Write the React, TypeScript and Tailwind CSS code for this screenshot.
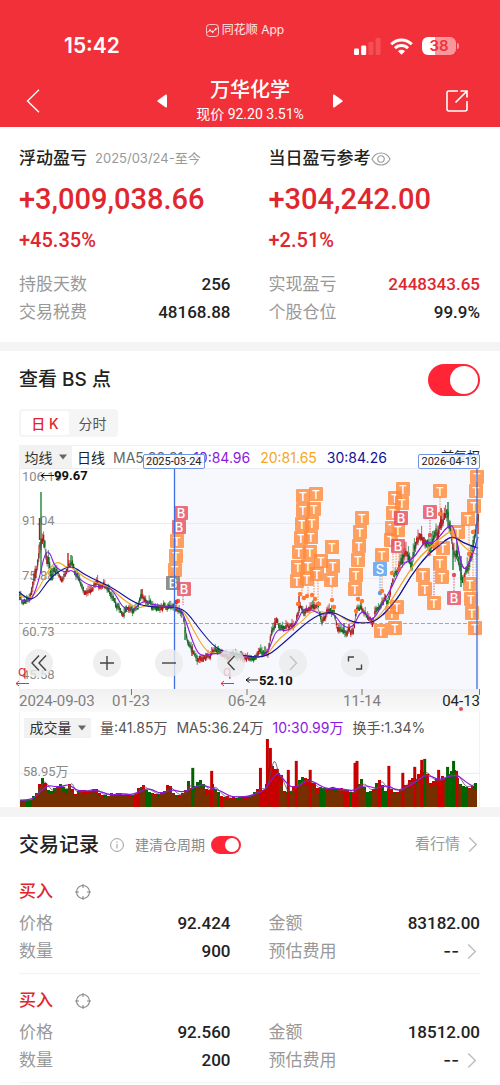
import type { ReactNode } from "react";

type Point = [number, number];
type Marker = [string, number, number];

const din = "font-[Roboto,'Noto_Sans_CJK_SC',sans-serif]";

/* ---------- chart data, in the units of the chart's viewBox ---------- */

const price: Point[] = [
  [0, 130], [6, 135], [11, 129], [14, 115], [18, 103], [21, 78], [24, 73], [28, 89], [33, 105], [38, 100],
  [43, 114], [48, 102], [52, 93], [56, 104], [61, 115], [64, 124], [71, 122], [78, 115], [88, 119], [94, 129],
  [103, 147], [109, 142], [116, 144], [123, 127], [129, 135], [138, 139], [144, 140], [151, 137], [158, 140],
  [164, 145], [168, 172], [173, 180], [178, 190], [184, 189], [191, 189], [196, 180], [201, 185], [208, 189],
  [214, 187], [231, 191], [241, 185], [249, 185], [253, 162], [258, 154], [263, 162], [269, 158], [276, 159],
  [281, 136], [286, 145], [293, 137], [299, 139], [303, 152], [309, 144], [314, 143], [319, 160], [328, 164],
  [334, 162], [339, 138], [346, 145], [353, 155], [358, 142], [364, 133], [369, 132], [374, 112], [381, 97],
  [386, 85], [393, 93], [398, 73], [404, 67], [411, 79], [418, 66], [423, 52], [428, 47], [431, 55], [434, 82],
  [439, 92], [443, 112], [448, 99], [453, 86], [456, 69], [459, 50],
];

const ma10: Point[] = [
  [0, 131], [9, 135], [14, 129], [20, 112], [26, 84], [31, 84], [36, 100], [48, 105], [53, 101], [64, 115],
  [78, 119], [91, 119], [98, 129], [104, 140], [114, 143], [124, 132], [134, 137], [158, 139], [164, 144],
  [174, 175], [181, 189], [194, 185], [214, 187], [231, 190], [246, 188], [251, 179], [258, 160], [268, 164],
  [278, 155], [284, 140], [293, 142], [303, 147], [314, 144], [324, 159], [334, 160], [343, 140], [353, 155],
  [364, 135], [374, 117], [384, 95], [394, 92], [406, 72], [414, 77], [431, 55], [436, 62], [444, 107],
  [453, 89], [459, 69],
];

const ma20: Point[] = [
  [0, 128], [11, 132], [21, 119], [31, 99], [39, 93], [48, 100], [53, 99], [68, 112], [91, 119], [101, 129],
  [118, 141], [128, 137], [144, 139], [164, 140], [174, 162], [188, 185], [198, 185], [214, 187], [231, 190],
  [248, 188], [256, 175], [268, 164], [284, 153], [293, 142], [308, 145], [316, 144], [331, 155], [344, 154],
  [354, 155], [371, 135], [384, 113], [398, 92], [408, 82], [423, 69], [433, 62], [439, 72], [448, 82],
  [459, 87],
];

const ma30: Point[] = [
  [0, 124], [9, 132], [18, 129], [28, 114], [38, 104], [53, 97], [64, 106], [81, 114], [94, 120], [114, 134],
  [128, 139], [158, 139], [168, 144], [181, 162], [198, 182], [214, 185], [231, 189], [248, 189], [268, 172],
  [288, 154], [303, 145], [316, 144], [334, 155], [353, 155], [364, 147], [378, 132], [391, 109], [408, 87],
  [421, 77], [433, 67], [444, 75], [459, 80],
];

const markers: Marker[] = [
  ["T", 158, 73], ["T", 157, 88], ["T", 156, 102], ["G", 154, 115], ["B", 160, 59], ["B", 162, 45], ["B", 165, 121],
  ["T", 278, 113], ["T", 279, 99], ["T", 280, 84], ["T", 282, 70], ["T", 283, 56], ["T", 284, 42], ["T", 284, 28],
  ["T", 288, 111], ["T", 289, 98], ["T", 291, 84], ["T", 292, 69], ["T", 293, 55], ["T", 295, 41], ["T", 297, 26],
  ["T", 298, 106], ["T", 302, 93], ["T", 312, 112], ["T", 314, 98], ["T", 313, 79],
  ["T", 336, 121], ["T", 337, 107], ["T", 339, 92], ["T", 340, 78], ["T", 341, 64], ["T", 343, 50],
  ["T", 363, 87], ["S", 361, 101], ["T", 362, 163], ["T", 373, 145], ["T", 378, 139], ["T", 376, 160],
  ["T", 372, 72], ["T", 373, 60], ["T", 374, 45], ["T", 376, 30], ["T", 379, 62], ["T", 383, 35], ["T", 384, 21],
  ["B", 382, 50], ["B", 379, 78], ["B", 411, 44], ["T", 421, 23],
  ["T", 424, 80], ["T", 421, 95], ["T", 423, 109], ["T", 404, 107], ["T", 406, 121], ["T", 415, 135],
  ["T", 439, 64], ["B", 435, 130],
  ["T", 449, 51], ["T", 455, 38], ["T", 457, 23], ["T", 458, 9],
  ["T", 451, 116], ["T", 452, 131], ["T", 453, 145], ["T", 456, 160],
];

const markerFill: Record<string, string> = { T: "#ff8a3c", B: "#e4505f", S: "#559fee", G: "#777777" };

// x, y1, y2, colour of the dotted line that ties a marker to its candle
const leaders: [number, number, number, string][] = [
  [283, 119, 132, "#ff8a3c"], [289, 119, 128, "#ff8a3c"], [295, 112, 130, "#ff8a3c"], [299, 112, 132, "#ff8a3c"],
  [313, 119, 130, "#ff8a3c"], [340, 126, 134, "#ff8a3c"], [361, 108, 124, "#559fee"], [363, 108, 124, "#ff8a3c"],
  [374, 80, 104, "#ff8a3c"], [377, 85, 104, "#ff8a3c"], [380, 85, 102, "#ff8a3c"], [411, 52, 68, "#e4505f"],
  [421, 30, 48, "#ff8a3c"], [415, 88, 128, "#e4505f"], [435, 108, 123, "#e4505f"], [450, 58, 108, "#ff8a3c"],
  [454, 85, 140, "#ff8a3c"], [457, 85, 152, "#ff8a3c"], [164, 128, 137, "#e4505f"],
];

const dots: [number, number, string][] = [
  [281, 126, "#ff7a2e"], [285, 130, "#ff7a2e"], [288, 128, "#ff7a2e"], [293, 127, "#ff7a2e"], [296, 131, "#ff7a2e"],
  [279, 136, "#ff7a2e"], [300, 136, "#ff7a2e"], [313, 132, "#ff7a2e"], [315, 139, "#ff7a2e"], [339, 131, "#ff7a2e"],
  [343, 133, "#ff7a2e"], [337, 143, "#ff7a2e"], [361, 125, "#559fee"], [363, 123, "#ff7a2e"], [373, 105, "#ff7a2e"],
  [380, 101, "#e4505f"], [411, 67, "#e4505f"], [421, 46, "#ff7a2e"], [410, 86, "#ff7a2e"], [415, 79, "#ff7a2e"],
  [418, 76, "#ff7a2e"], [435, 107, "#e4505f"], [454, 64, "#ff7a2e"], [450, 86, "#ff7a2e"], [159, 133, "#ff5030"],
  [157, 134, "#e4302f"],
];

const volume: Point[] = [
  [0, 7], [11, 8], [16, 14], [20, 28], [23, 30], [27, 18], [33, 19], [39, 26], [46, 17], [49, 27], [54, 14],
  [61, 17], [76, 18], [81, 12], [98, 14], [114, 12], [119, 22], [124, 22], [131, 15], [141, 13], [149, 22],
  [158, 12], [164, 14], [168, 26], [173, 20], [182, 27], [188, 15], [193, 22], [198, 16], [204, 10], [228, 11],
  [234, 15], [241, 20], [246, 15], [249, 42], [253, 40], [258, 34], [262, 30], [266, 14], [274, 20], [278, 26],
  [283, 30], [291, 28], [298, 19], [314, 20], [328, 17], [334, 14], [338, 24], [343, 28], [348, 17], [354, 18],
  [361, 27], [368, 15], [371, 22], [374, 18], [381, 17], [386, 24], [394, 27], [401, 33], [407, 40], [411, 25],
  [414, 28], [421, 30], [429, 34], [436, 36], [441, 28], [446, 20], [458, 24],
];

const volumeSpikes: [number, number, string][] = [
  [172, 39, "#006400"], [191, 36, "#c80000"], [240, 39, "#c80000"], [247, 68, "#c80000"], [250, 59, "#c80000"],
  [257, 38, "#c80000"], [268, 37, "#c80000"], [276, 46, "#c80000"], [290, 37, "#c80000"], [335, 44, "#c80000"],
  [337, 46, "#c80000"], [369, 41, "#c80000"], [383, 34, "#c80000"], [395, 40, "#c80000"], [402, 47, "#c80000"],
  [405, 48, "#006400"], [419, 37, "#c80000"], [428, 40, "#006400"], [434, 46, "#006400"], [437, 36, "#c80000"],
];

const VOLUME_BASE = 69;

function at(points: Point[], x: number) {
  for (let i = 1; i < points.length; i++) {
    const [x0, y0] = points[i - 1];
    const [x1, y1] = points[i];
    if (x <= x1) return y0 + ((y1 - y0) * (x - x0)) / (x1 - x0);
  }
  return points[points.length - 1][1];
}

// fixed pseudo-random sequence, so the chart is the same on every render
function noise(i: number) {
  const v = Math.sin(i * 12.9898 + 4.137) * 43758.5453;
  return v - Math.floor(v);
}

// smooth path through the points by way of their midpoints
function curve(points: Point[]) {
  let d = `M${points[0][0]} ${points[0][1]}`;
  for (let i = 1; i < points.length - 1; i++) {
    const [x, y] = points[i];
    const [nx, ny] = points[i + 1];
    d += `Q${x} ${y} ${(x + nx) / 2} ${(y + ny) / 2}`;
  }
  const [lx, ly] = points[points.length - 1];
  return `${d}L${lx} ${ly}`;
}

const candles = Array.from({ length: 383 }, (_, i) => {
  const x = i * 1.2 + 0.6;
  const slope = at(price, x + 2) - at(price, x - 2);
  const wild = x > 380 || (x > 12 && x < 34) ? 1.7 : 1;
  const mid = at(price, x) + (noise(Math.floor(i / 2) + 200) - 0.5) * 5 * wild;
  return {
    x,
    up: noise(Math.floor(i / 3)) < (slope < -1.5 ? 0.75 : slope > 1.5 ? 0.3 : 0.5),
    high: mid - (1 + noise(i + 500) * 6) * wild,
    low: mid + (1 + noise(i + 900) * 4) * wild,
    top: mid - (0.8 + noise(i + 20) * 2) * wild,
    bottom: mid + (0.8 + noise(i + 60) * 2) * wild,
  };
});

const bars = Array.from({ length: 153 }, (_, i) => {
  const x = i * 3;
  const level = at(volume, x + 1);
  return {
    x,
    height: Math.round(level * (0.86 + noise(i + 40) * 0.2)),
    base: Math.round(level * (0.72 + noise(i + 70) * 0.14)),
    red: noise(i + 300) > (x > 220 ? 0.38 : 0.52),
    mixed: noise(Math.floor(i / 2) + 900) > (x > 220 ? 0.35 : 0.12),
  };
});

const volumeLine: Point[] = Array.from({ length: 66 }, (_, i) => [
  i * 7,
  VOLUME_BASE - (at(volume, i * 7) + at(volume, Math.max(0, i * 7 - 5)) + at(volume, Math.max(0, i * 7 - 10))) / 3.2,
]);

const volumeLineFast: Point[] = Array.from({ length: 115 }, (_, i) => [
  i * 4,
  VOLUME_BASE - at(volume, Math.max(0, i * 4 - 3)) * (0.85 + noise(i + 11) * 0.15) - (i === 64 ? 14 : 0),
]);

const priceLabels: [string, number][] = [
  ["106.19", 13],
  ["91.04", 57],
  ["75.88", 112],
  ["60.73", 168],
  ["45.58", 211],
];

/* ---------- small parts ---------- */

function Toggle({ id, small }: { id: string; small?: boolean }) {
  return (
    <input
      id={id}
      type="checkbox"
      role="switch"
      defaultChecked
      className={
        small
          ? "relative h-[18px] w-[30px] shrink-0 appearance-none rounded-full bg-gray-300 checked:bg-[#ff2436] before:absolute before:left-0.5 before:top-0.5 before:size-3.5 before:rounded-full before:bg-white checked:before:left-3.5"
          : "relative h-8 w-[52px] shrink-0 appearance-none rounded-full bg-gray-300 checked:bg-[#ff2436] before:absolute before:left-0.5 before:top-0.5 before:size-7 before:rounded-full before:bg-white checked:before:left-[22px]"
      }
    />
  );
}

function Chevron() {
  return (
    <svg viewBox="0 0 10 18" className="h-[17px] w-[10px] shrink-0" fill="none" stroke="#bdbdbd" strokeWidth="1.5">
      <path d="M1 1.5 L8.5 9 L1 16.5" />
    </svg>
  );
}

function Caret() {
  return (
    <svg viewBox="0 0 8 6" className="h-[6px] w-2" fill="#666">
      <path d="M0 .5h8L4 5.5z" />
    </svg>
  );
}

function Row({ label, children, red }: { label: string; children: ReactNode; red?: boolean }) {
  return (
    <div className="flex h-7 items-center justify-between">
      <dt className="text-[17px] text-[#999]">{label}</dt>
      <dd className={`${din} flex items-center text-[17px] font-medium ${red ? "text-[#e0262f]" : "text-[#222]"}`}>
        {children}
      </dd>
    </div>
  );
}

/* ---------- header ---------- */

function StatusBar() {
  return (
    <div className="relative flex h-[74px] items-end justify-between pb-4 pl-16 pr-[41px]">
      <time className="text-[21px] font-semibold leading-6">15:42</time>

      <div className="absolute inset-x-0 top-[21px] flex items-center justify-center gap-[3px] pr-2.5 text-[12px] leading-[18px] text-white/90">
        <svg viewBox="0 0 13 13" className="size-[13px]" fill="none" stroke="currentColor" strokeWidth="0.8">
          <rect x="0.5" y="0.5" width="12" height="12" rx="3" />
          <path d="M1 8.5 4 6.5 6.5 8 12 3.5" />
          <circle cx="4" cy="6.3" r="0.7" fill="currentColor" />
          <circle cx="6.6" cy="7.8" r="0.8" fill="currentColor" />
          <circle cx="9.5" cy="5.2" r="0.7" fill="currentColor" />
        </svg>
        <span>同花顺 App</span>
      </div>

      <div className="flex h-6 items-center gap-[9px]">
        <svg viewBox="0 0 27 17" className="h-[17px] w-[27px]" fill="#fff">
          <rect x="0" y="10.5" width="5" height="6.5" rx="1.2" />
          <rect x="7.2" y="7.5" width="5" height="9.5" rx="1.2" />
          <rect x="14.4" y="4" width="5" height="13" rx="1.2" opacity="0.15" />
          <rect x="21.6" y="0" width="5" height="17" rx="1.2" opacity="0.15" />
        </svg>
        <svg viewBox="0 0 23 17" className="h-[17px] w-[23px]" fill="none" stroke="#fff" strokeWidth="3">
          <path d="M1.2 6.2a14.6 14.6 0 0 1 20.6 0" />
          <path d="M5 10.2a9.2 9.2 0 0 1 13 0" />
          <path d="M11.5 16.8 8 13.2a5 5 0 0 1 7 0z" fill="#fff" stroke="none" />
        </svg>
        <div className="flex items-center gap-px">
          <div className="flex h-[18px] w-[34px] items-center justify-center rounded-[6px] bg-linear-to-r from-white from-38% to-white/50 to-38% text-[15px] font-semibold leading-[18px] text-[#f23039]">
            38
          </div>
          <span className="h-1.5 w-0.5 rounded-r-full bg-white/50" />
        </div>
      </div>
    </div>
  );
}

function Header() {
  return (
    <header className="bg-[#f23039] text-white">
      <StatusBar />
      <div className="flex h-[53px] items-center justify-between px-[26px]">
        <button type="button" aria-label="返回" className="w-12">
          <svg viewBox="0 0 14 24" className="h-6 w-3.5" fill="none" stroke="currentColor" strokeWidth="1.4">
            <path d="M13 .8 1.5 12 13 23.2" />
          </svg>
        </button>
        <div className="flex items-center gap-[29px]">
          <button type="button" aria-label="上一只">
            <svg viewBox="0 0 10 14" className="h-3.5 w-2.5" fill="currentColor">
              <path d="M8.4.7.8 6.2a1 1 0 0 0 0 1.6l7.6 5.5c.7.5 1.6 0 1.6-.8v-11c0-.8-.9-1.3-1.6-.8z" />
            </svg>
          </button>
          <div className="text-center">
            <h1 className="text-[20px] font-medium leading-[26px]">万华化学</h1>
            <p className={`${din} text-[14px] leading-[22px]`}>现价 92.20 3.51%</p>
          </div>
          <button type="button" aria-label="下一只">
            <svg viewBox="0 0 10 14" className="h-3.5 w-2.5" fill="currentColor">
              <path d="m1.6.7 7.6 5.5a1 1 0 0 1 0 1.6l-7.6 5.5c-.7.5-1.6 0-1.6-.8v-11C0 .7.9.2 1.6.7z" />
            </svg>
          </button>
        </div>
        <button type="button" aria-label="分享" className="flex w-12 justify-end pr-1.5">
          <svg viewBox="0 0 22 22" className="size-[22px]" fill="none" stroke="currentColor" strokeWidth="1.6">
            <path d="M12 1H3a2 2 0 0 0-2 2v16a2 2 0 0 0 2 2h16a2 2 0 0 0 2-2v-8" />
            <path d="M14.5 1H21v6.5M21 1 9.5 12.5" />
          </svg>
        </button>
      </div>
    </header>
  );
}

/* ---------- profit summary ---------- */

function Summary() {
  return (
    <section className="grid grid-cols-2 gap-x-[38px] pb-[15px] pl-[19px] pr-5 pt-5">
      <div>
        <h2 className="flex h-6 items-center gap-2 text-[17px] font-medium">
          浮动盈亏 <span className="whitespace-nowrap text-[13px] font-normal text-[#999]">2025/03/24-至今</span>
        </h2>
        <p className={`${din} mt-2 text-[29px] font-medium leading-10 text-[#e0262f]`}>+3,009,038.66</p>
        <p className={`${din} mt-[9px] text-[20px] font-medium leading-6 text-[#e0262f]`}>+45.35%</p>
        <dl className="mt-[19px]">
          <Row label="持股天数">256</Row>
          <Row label="交易税费">48168.88</Row>
        </dl>
      </div>
      <div>
        <h2 className="flex h-6 items-center text-[17px] font-medium">
          当日盈亏参考
          <svg viewBox="0 0 20 14" className="h-3.5 w-5" fill="none" stroke="#999" strokeWidth="1.1">
            <path d="M1 7c2-4 5.3-6 9-6s7 2 9 6c-2 4-5.3 6-9 6s-7-2-9-6z" />
            <circle cx="10" cy="7" r="3.2" />
          </svg>
        </h2>
        <p className={`${din} mt-2 text-[29px] font-medium leading-10 text-[#e0262f]`}>+304,242.00</p>
        <p className={`${din} mt-[9px] text-[20px] font-medium leading-6 text-[#e0262f]`}>+2.51%</p>
        <dl className="mt-[19px]">
          <Row label="实现盈亏" red>
            2448343.65
          </Row>
          <Row label="个股仓位">99.9%</Row>
        </dl>
      </div>
    </section>
  );
}

/* ---------- charts ---------- */

function PriceChart() {
  return (
    <svg viewBox="0 0 461 244" className="block w-full overflow-visible" role="img" aria-label="日K线">
      <defs>
        <linearGradient id="axis" x1="0" y1="0" x2="0" y2="1">
          <stop offset="0" stopColor="#f0f0f0" />
          <stop offset="1" stopColor="#fafafa" />
        </linearGradient>
      </defs>
      <rect x="156" y="0" width="305" height="221" fill="#f6f8fe" />
      <path d="M0 .5H461M0 55.5H461M0 110.5H461M0 165.5H461M.5 0V221" stroke="#ececf0" fill="none" />
      <rect x="0" y="221" width="461" height="23" fill="url(#axis)" />

      <g fontFamily="Roboto, sans-serif" fontSize="13" fill="#8a8a8a">
        {priceLabels.map(([text, y]) => (
          <text key={text} x="3" y={y}>
            {text}
          </text>
        ))}
      </g>

      <path d="M0 155.5H461" stroke="#ef9450" strokeWidth="1.2" strokeDasharray="4 2" />

      {/* candles */}
      {candles.map((c) => (
        <g key={c.x} stroke={c.up ? "#b81414" : "#0a6a1a"}>
          <path d={`M${c.x} ${c.high}V${c.low}`} strokeWidth="0.7" />
          <path d={`M${c.x} ${c.top}V${c.bottom}`} strokeWidth="1.3" />
        </g>
      ))}
      <path
        d="M22 24V105M434 80V102M442 88V119M429 34V60M52 87V96M166 162V172M325 155V165M199 178V185"
        stroke="#0a7a2a"
        strokeWidth="1.3"
      />
      <path
        d="M20.5 50V72M49 85V98M28 88V96M123 121V130M422 40V62M459 46V66M256 150V160M280 128V140M173 178V188"
        stroke="#c01010"
        strokeWidth="1.3"
      />

      <g fill="none" strokeWidth="1.1">
        <path d={curve(price)} stroke="#555" strokeWidth="0.7" />
        <path d={curve(ma20)} stroke="#f5a623" />
        <path d={curve(ma10)} stroke="#8a1be0" />
        <path d={curve(ma30)} stroke="#14149a" />
      </g>

      {/* trades */}
      {leaders.map(([x, y1, y2, color]) => (
        <path key={`${x}-${y1}`} d={`M${x} ${y1}V${y2}`} stroke={color} strokeDasharray="1.5 1.2" />
      ))}
      {markers.map(([kind, x, y]) => (
        <g key={`${x}-${y}`}>
          <rect x={x - 7} y={y - 7} width="14" height="14" rx="1" fill={markerFill[kind]} opacity="0.82" />
          <text
            x={x}
            y={y + 5}
            fontFamily="Inter, sans-serif"
            fontSize={kind === "T" ? 12 : 13}
            fontWeight="500"
            textAnchor="middle"
            fill="#fff"
          >
            {kind === "G" ? "B" : kind}
          </text>
        </g>
      ))}
      {dots.map(([x, y, color]) => (
        <circle key={`${x}-${y}`} cx={x} cy={y} r="2.2" fill={color} />
      ))}
      {/* the trend lines stay readable over the markers on the right */}
      <g fill="none" strokeWidth="1.1" opacity="0.8">
        <path d={curve(ma20.slice(-9))} stroke="#f5a623" />
        <path d={curve(ma10.slice(-9))} stroke="#8a1be0" />
        <path d={curve(ma30.slice(-8))} stroke="#14149a" />
      </g>

      <path d="M155.5 0V221M458 0V221" stroke="#3f6fe0" strokeWidth="1.3" />

      <g fontFamily="Roboto, sans-serif" fontSize="13" fontWeight="700" fill="#111">
        <text x="35" y="12">99.67</text>
        <text x="240" y="217">52.10</text>
      </g>
      <path
        d="M35 7.5H22M25.5 5 22 7.5 25.5 10M239 212H227M230.5 209.5 227 212 230.5 214.5"
        fill="none"
        stroke="#111"
      />

      {/* ex-rights marks */}
      <g fontFamily="Inter, sans-serif" fontSize="14" fill="#e0304a">
        <text x="-1" y="208">q</text>
        <text x="204" y="208">q</text>
      </g>
      <path
        d="M10 215.5H-3M0 213-3 215.5 0 218M215 215.5H202M205 213 202 215.5 205 218"
        fill="none"
        stroke="#e0304a"
      />

      {/* time axis */}
      <path d="M112.5 221V227M228 221V227M343 221V227M460.5 221V227" stroke="#777" />
      <g fontFamily="Roboto, sans-serif" fontSize="15" fill="#808080">
        <text x="0" y="238">2024-09-03</text>
        <text x="112" y="238" textAnchor="middle">01-23</text>
        <text x="228" y="238" textAnchor="middle">06-24</text>
        <text x="343" y="238" textAnchor="middle">11-14</text>
        <text x="461" y="238" textAnchor="end" fill="#222">04-13</text>
      </g>
      <circle cx="442" cy="241" r="2" fill="#e4505f" />
    </svg>
  );
}

function ChartButton({ label, faded, children }: { label: string; faded?: boolean; children: ReactNode }) {
  return (
    <button
      type="button"
      aria-label={label}
      className={`flex size-7 items-center justify-center rounded-full bg-[#ebebeb]/80 ${faded ? "text-[#c4c4c4]" : "text-[#444]"}`}
    >
      <svg viewBox="0 0 18 18" className="size-[18px]" fill="none" stroke="currentColor" strokeWidth="1.4">
        {children}
      </svg>
    </button>
  );
}

function DateFlag({ children, className }: { children: string; className: string }) {
  return (
    <span
      className={`${din} absolute rounded-[2px] border border-[#6f93e6] bg-white/85 px-0.5 text-[11px] leading-[13px] text-[#222] ${className}`}
    >
      {children}
    </span>
  );
}

function VolumeChart() {
  return (
    <svg viewBox="0 0 461 69" className="block w-full" role="img" aria-label="成交量">
      <path d="M0 35.5H461" stroke="#ececec" />
      {bars.map((b) => (
        <g key={b.x} shapeRendering="crispEdges">
          <rect x={b.x} y={VOLUME_BASE - b.height} width="3" height={b.height} fill={b.red ? "#c80000" : "#006400"} />
          {b.mixed && <rect x={b.x} y={VOLUME_BASE - b.base} width="3" height={b.base} fill="#763000" />}
        </g>
      ))}
      {volumeSpikes.map(([x, height, color]) => (
        <rect key={x} x={x} y={VOLUME_BASE - height} width="3" height={height} fill={color} />
      ))}
      <path d={curve(volumeLineFast)} fill="none" stroke="#555" strokeWidth="0.8" />
      <path d={curve(volumeLine)} fill="none" stroke="#8a1be0" strokeWidth="1.2" />
      <text x="3" y="38" fontFamily="Roboto, 'Noto Sans CJK SC', sans-serif" fontSize="13" fill="#8a8a8a">
        58.95万
      </text>
    </svg>
  );
}

function Charts() {
  return (
    <section className="pl-[19px] pr-5 pt-[13px]">
      <div className="flex h-8 items-center justify-between">
        <label htmlFor="bs" className="text-[19px] font-medium">
          查看 BS 点
        </label>
        <Toggle id="bs" />
      </div>

      <div className="mt-[13px] inline-flex h-7 rounded-[4px] bg-[#f5f5f5] p-0.5 text-[14px] align-top">
        <button type="button" className="w-12 rounded-[3px] bg-white font-medium text-[#e0262f]">
          日 K
        </button>
        <button type="button" className="w-[47px] text-[#555]">
          分时
        </button>
      </div>

      <div className="relative mt-2">
        <div className="flex h-[23px] items-center whitespace-nowrap border-t border-[#f2f2f2] text-[14px]">
          <button type="button" className="flex h-full w-[53px] items-center justify-center gap-1.5 bg-[#f2f2f2] text-[#333]">
            均线 <Caret />
          </button>
          <span className="ml-[5px] text-[#222]">日线</span>
          <span className="ml-2 text-[#666]">MA5:88.21</span>
          <span className="ml-2.5 text-[#8a1be0]">10:84.96</span>
          <span className="ml-2.5 text-[#f5a623]">20:81.65</span>
          <span className="ml-2.5 text-[#14149a]">30:84.26</span>
          <span className="ml-auto text-[13px] text-[#222]">前复权</span>
        </div>
        <PriceChart />
        <DateFlag className="left-[124px] top-[9px]">2025-03-24</DateFlag>
        <DateFlag className="right-0 top-[9px]">2026-04-13</DateFlag>
        <div className="absolute bottom-[35px] left-1.5 flex gap-[34px]">
          <div className="mr-1.5">
            <ChartButton label="最早">
              <path d="M9 1.5 2 9l7 7.5M16 1.5 9 9l7 7.5" />
            </ChartButton>
          </div>
          <ChartButton label="放大">
            <path d="M9 2v14M2 9h14" />
          </ChartButton>
          <ChartButton label="缩小">
            <path d="M2 9h14" />
          </ChartButton>
          <ChartButton label="向前">
            <path d="M12.5 2 6 9l6.5 7" />
          </ChartButton>
          <ChartButton label="向后" faded>
            <path d="M6 2l6.5 7L6 16" />
          </ChartButton>
          <ChartButton label="全屏">
            <path d="M2.5 7.5V3H8M15.5 10.5V15H10" />
          </ChartButton>
        </div>
      </div>

      <div className="border-x border-[#f2f2f2]">
        <div className="flex items-center gap-[9px] whitespace-nowrap pl-1 pt-1.5 text-[14px] leading-5 text-[#555]">
          <button type="button" className="flex h-5 w-[67px] items-center justify-center gap-1.5 bg-[#f2f2f2] text-[#333]">
            成交量 <Caret />
          </button>
          <span>量:41.85万</span>
          <span>MA5:36.24万</span>
          <span className="text-[#8a1be0]">10:30.99万</span>
          <span>换手:1.34%</span>
        </div>
        <VolumeChart />
      </div>
    </section>
  );
}

/* ---------- trade records ---------- */

const records = [
  { price: "92.424", amount: "83182.00", count: "900" },
  { price: "92.560", amount: "18512.00", count: "200" },
];

function TradeRecord({ price, amount, count }: (typeof records)[number]) {
  return (
    <li className="border-b border-[#f3f3f3] pb-[7px] pt-[15px]">
      <div className="flex h-6 items-center gap-[22px]">
        <h3 className="text-[17px] font-medium text-[#e0262f]">买入</h3>
        <button type="button" aria-label="定位">
          <svg viewBox="0 0 16 16" className="size-4" fill="none" stroke="#888" strokeWidth="1.1">
            <circle cx="8" cy="8" r="6.5" />
            <path d="M8 0v4M8 12v4M0 8h4M12 8h4" />
          </svg>
        </button>
      </div>
      <dl className="mt-1.5 grid grid-cols-2 gap-x-[38px]">
        <Row label="价格">{price}</Row>
        <Row label="金额">{amount}</Row>
        <Row label="数量">{count}</Row>
        <Row label="预估费用">
          <span className="mr-2 font-[Inter,sans-serif]">--</span>
          <span className="mr-[3px] flex">
            <Chevron />
          </span>
        </Row>
      </dl>
    </li>
  );
}

function Records() {
  return (
    <section className="pl-[19px] pr-5 pt-4">
      <div className="flex h-6 items-center">
        <h2 className="text-[20px] font-medium">交易记录</h2>
        <svg viewBox="0 0 14 14" className="ml-[11px] size-3.5" fill="none" stroke="#999">
          <circle cx="7" cy="7" r="6.4" />
          <path d="M7 6v4.5M7 3.5v1.3" />
        </svg>
        <label htmlFor="cycle" className="ml-[11px] mr-1.5 text-[14px] text-[#888]">
          建清仓周期
        </label>
        <Toggle id="cycle" small />
        <a href="#quotes" className="ml-auto mr-0.5 flex items-center gap-2 text-[15px] text-[#999]">
          看行情 <Chevron />
        </a>
      </div>
      <ul className="mt-2">
        {records.map((r) => (
          <TradeRecord key={r.price} {...r} />
        ))}
      </ul>
    </section>
  );
}

export default function App() {
  return (
    <main className="min-h-screen overflow-x-hidden bg-white font-[Inter,'Noto_Sans_CJK_SC',sans-serif] text-[#222]">
      <Header />
      <Summary />
      <div className="h-[9px] bg-[#f4f4f4]" />
      <Charts />
      <div className="h-2.5 bg-[#f4f4f4]" />
      <Records />
    </main>
  );
}
